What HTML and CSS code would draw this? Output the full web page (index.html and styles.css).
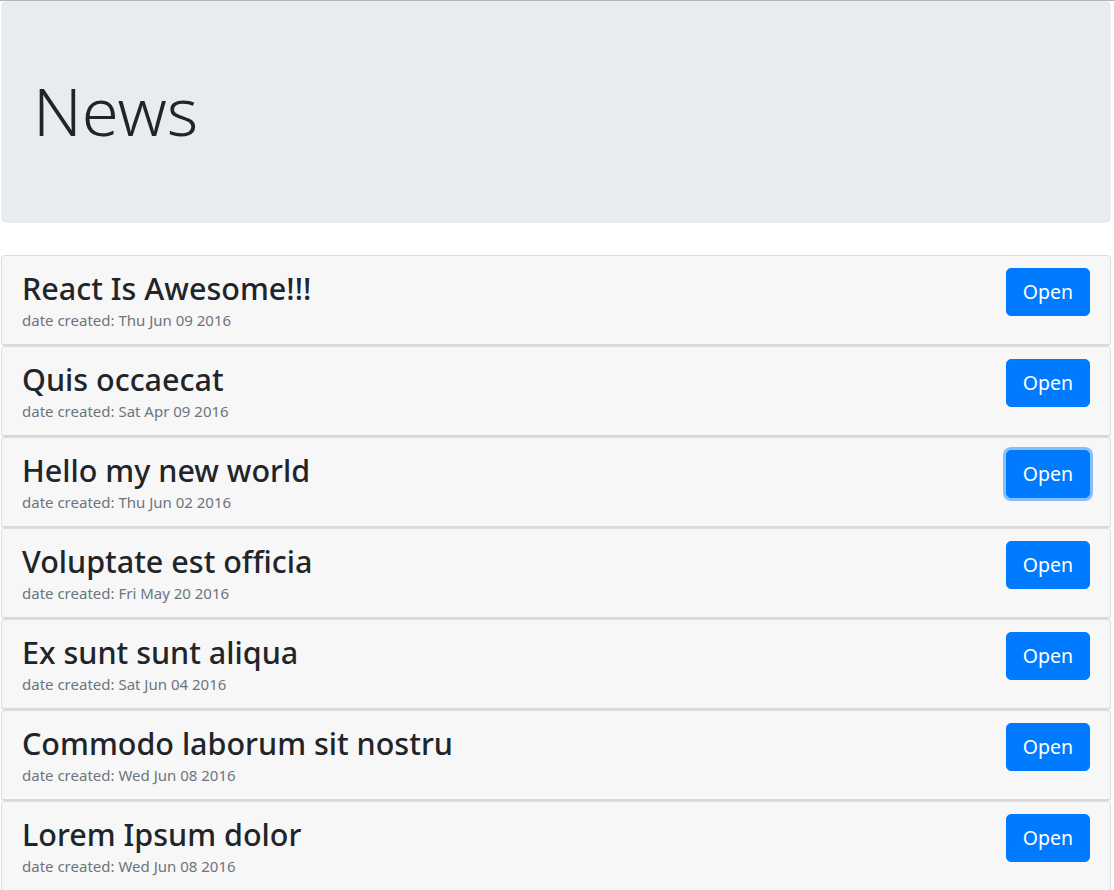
FILE: index.html
```html
<!DOCTYPE html>
<html lang="en">
<head>
<meta charset="utf-8">
<title>News</title>
<link rel="stylesheet" href="styles.css">
</head>
<body>
<div class="page">
  <div class="jumbotron">
    <h1 class="display">News</h1>
  </div>
  <ul class="news-list">
    <li class="news-item">
      <div class="news-text">
        <h2 class="news-title">React Is Awesome!!!</h2>
        <div class="news-date">date created: Thu Jun 09 2016</div>
      </div>
      <button class="btn">Open</button>
    </li>
    <li class="news-item">
      <div class="news-text">
        <h2 class="news-title">Quis occaecat</h2>
        <div class="news-date">date created: Sat Apr 09 2016</div>
      </div>
      <button class="btn">Open</button>
    </li>
    <li class="news-item">
      <div class="news-text">
        <h2 class="news-title">Hello my new world</h2>
        <div class="news-date">date created: Thu Jun 02 2016</div>
      </div>
      <button class="btn btn-focus">Open</button>
    </li>
    <li class="news-item">
      <div class="news-text">
        <h2 class="news-title">Voluptate est officia</h2>
        <div class="news-date">date created: Fri May 20 2016</div>
      </div>
      <button class="btn">Open</button>
    </li>
    <li class="news-item">
      <div class="news-text">
        <h2 class="news-title">Ex sunt sunt aliqua</h2>
        <div class="news-date">date created: Sat Jun 04 2016</div>
      </div>
      <button class="btn">Open</button>
    </li>
    <li class="news-item">
      <div class="news-text">
        <h2 class="news-title">Commodo laborum sit nostru</h2>
        <div class="news-date">date created: Wed Jun 08 2016</div>
      </div>
      <button class="btn">Open</button>
    </li>
    <li class="news-item">
      <div class="news-text">
        <h2 class="news-title">Lorem Ipsum dolor</h2>
        <div class="news-date">date created: Wed Jun 08 2016</div>
      </div>
      <button class="btn">Open</button>
    </li>
  </ul>
</div>
</body>
</html>
```
FILE: styles.css
```css
html, body {
  margin: 0;
  padding: 0;
  background: #fff;
}
body {
  font-family: "Noto Sans", "Open Sans", sans-serif;
  color: #212529;
  border-top: 1px solid #b4b4b8;
}
.page {
  padding: 0 3px 0 1px;
}
.jumbotron {
  background: #e9ecef;
  border-radius: 5px;
  padding: 64px 32px;
  margin-bottom: 32px;
}
.display {
  margin: 0 0 8px 0;
  font-size: 67px;
  font-weight: 300;
  line-height: 86px;
  padding-top: 2px;
  height: 84px;
}
.news-list {
  list-style: none;
  margin: 0;
  padding: 0;
}
.news-item {
  display: flex;
  align-items: flex-start;
  justify-content: space-between;
  background: #f7f7f7;
  border: 1px solid #dedede;
  border-bottom: 2px solid #d9d9d9;
  border-radius: 4px;
  padding: 12px 20px;
  height: 64px;
}
.news-title {
  margin: 0;
  font-size: 30.5px;
  font-weight: 500;
  line-height: 40px;
}
.news-date {
  font-size: 15px;
  line-height: 24px;
  color: #6c757d;
}
.btn {
  font-family: inherit;
  font-size: 19.5px;
  line-height: 30px;
  padding: 8px 16px;
  border: 1px solid #007bff;
  background: #007bff;
  color: #fff;
  border-radius: 5px;
  cursor: pointer;
}
.btn-focus {
  box-shadow: 0 0 0 3px rgba(0, 123, 255, 0.45);
}
```
